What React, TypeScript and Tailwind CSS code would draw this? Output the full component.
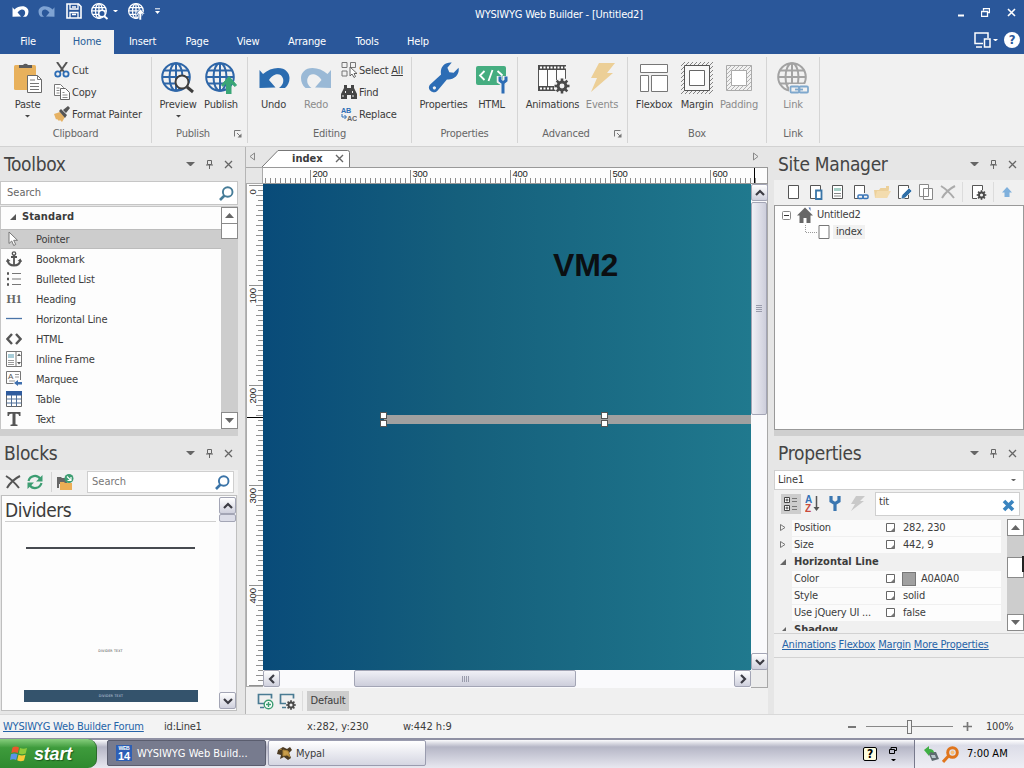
import React from 'react';

type SvgProps = { w?: number; h?: number; box?: string; className?: string; children: React.ReactNode };

const Svg: React.FC<SvgProps> = ({ w = 16, h = 16, box, className = '', children }) => (
  <svg width={w} height={h} viewBox={box || `0 0 ${w} ${h}`} fill="none" className={`shrink-0 ${className}`}>
    {children}
  </svg>
);

const Caret: React.FC<{ color?: string; size?: number }> = ({ color = '#444', size = 6 }) => (
  <Svg w={size} h={size / 2} box="0 0 6 3">
    <path d="M0 0h6L3 3z" fill={color} />
  </Svg>
);

const Globe: React.FC<{ color: string; w?: number; sw?: number }> = ({ color, w = 32, sw = 2 }) => (
  <g stroke={color} strokeWidth={sw} transform={`scale(${w / 32})`}>
    <circle cx="15" cy="15" r="13.8" />
    <ellipse cx="15" cy="15" rx="6.5" ry="13.8" />
    <path d="M15 1v28M1 15h28M3 8.5h24M3 21.5h24" />
  </g>
);

const UndoShape: React.FC<{ color: string }> = ({ color }) => (
  <path d="M1 4L4.500 8C9 4 14 2 19.500 2C27 2 31 7 31 12C31 16 29.500 19.500 26.500 22H20.500C24 19.500 25.500 16 24.500 12.500C23.500 9 20.500 7.500 17 8.500C14 9.500 12 11.500 10.500 14L17 21.500L1 22Z" fill={color} />
);

const Gear: React.FC<{ cx: number; cy: number; r: number; color?: string; bg?: string }> = ({ cx, cy, r, color = '#4a4a4a', bg = '#f1f1f1' }) => (
  <g>
    <circle cx={cx} cy={cy} r={r * 0.72} fill={color} />
    {[0, 45, 90, 135].map(a => (
      <rect key={a} x={cx - r * 0.17} y={cy - r} width={r * 0.34} height={r * 2} fill={color} transform={`rotate(${a} ${cx} ${cy})`} />
    ))}
    <circle cx={cx} cy={cy} r={r * 0.33} fill={bg} />
  </g>
);

const WrenchShape: React.FC<{ color: string }> = ({ color }) => (
  <path d="M2 23L13 13C11.500 6 16 0 24 0.500L19.500 6L21.500 10.500L26 11L31 6C32.500 13 26 19 19 18L9 30C5 34 -3 28 2 23ZM5 25.500a1.600 1.600 0 1 0 2.200 0a1.600 1.600 0 0 0-2.200 0Z" fill={color} fillRule="evenodd" />
);

const icons: Record<string, React.ReactNode> = {
  paste: (
    <Svg w={32} h={32}>
      <rect x="2" y="3" width="22" height="25" rx="1.500" fill="#e8b15c" />
      <path d="M7 6V3h4a3 3 0 0 1 5 0h4v3z" fill="#5b5b5b" />
      <path d="M15.500 13.500h10l4 4v13h-14z" fill="#fff" stroke="#6a6a6a" />
      <path d="M25.500 13.500v4h4M18 18h5M18 21.500h9M18 24.500h9M18 27.500h9" stroke="#777" />
    </Svg>
  ),
  preview: (
    <Svg w={34} h={32}>
      <Globe color="#2e66a8" sw={2} />
      <circle cx="21" cy="20" r="6.500" fill="#f1f1f1" stroke="#3e3e3e" strokeWidth="2" />
      <path d="M26 25l6 5" stroke="#3e3e3e" strokeWidth="3" />
    </Svg>
  ),
  publish: (
    <Svg w={32} h={32}>
      <Globe color="#2e66a8" sw={2} />
      <path d="M24 14.500l7.500 8.500-1.500 1.500-4-3.500V32h-4.500V21l-3.500 3.500-1.500-1.500z" fill="#3aa676" stroke="#3aa676" strokeWidth="1" />
    </Svg>
  ),
  undo: <Svg w={32} h={32} box="-.5 -4 32 32"><UndoShape color="#2b6cb0" /></Svg>,
  redo: <Svg w={32} h={32} box="0 -4 32 32"><g transform="translate(32 0) scale(-1 1)"><UndoShape color="#9ab9d6" /></g></Svg>,
  properties: <Svg w={34} h={32} box="-1 0 34 33"><WrenchShape color="#2d6db5" /></Svg>,
  html: (
    <Svg w={34} h={32}>
      <rect x="1" y="4" width="30" height="19" rx="2" fill="#45ad80" />
      <path d="M9.500 9L5 13.500 9.500 18M22.500 9l5 4.500M17.500 8l-4 11" stroke="#fff" strokeWidth="1.800" />
      <path d="M24.500 14v5l3 2 3-2v-5M28 20v12" stroke="#f1f1f1" strokeWidth="5.500" />
      <path d="M25 14.500v4l3 2.500 3-2.500v-4M28 20v11.500" stroke="#2d6db5" strokeWidth="3" />
    </Svg>
  ),
  animations: (
    <Svg w={34} h={32}>
      <path d="M2.500 3.500h27v25h-27z" fill="#fdfdfd" stroke="#555" />
      <path d="M2 5.500h28M2 26.500h28" stroke="#4c4c4c" strokeWidth="5" />
      <path d="M4 5.500h26M4 26.500h26" stroke="#fff" strokeWidth="2" strokeDasharray="2 1.500" />
      <path d="M11.500 8v16M20.500 8v16" stroke="#555" />
      <circle cx="26" cy="24" r="8" fill="#f1f1f1" />
      <Gear cx={26} cy={24} r={7.5} />
    </Svg>
  ),
  events: (
    <Svg w={32} h={32}>
      <path d="M13 1h16l-8 10h6L5 30l6-14H5z" fill="#eccf97" />
    </Svg>
  ),
  flexbox: (
    <Svg w={32} h={32}>
      <g fill="#fff" stroke="#777">
        <path d="M2.500 2.500h27v8h-27zM2.500 13.500h8v16h-8zM13.500 13.500h16v16h-16z" />
      </g>
    </Svg>
  ),
  margin: (
    <Svg w={32} h={32}>
      <defs>
        <pattern id="hatch" width="4" height="4" patternUnits="userSpaceOnUse">
          <path d="M-1 1l2-2M0 4l4-4M3 5l2-2" stroke="#777" strokeWidth=".9" />
        </pattern>
      </defs>
      <rect width="32" height="32" fill="url(#hatch)" />
      <path d="M3.500 3.500h25v25h-25z" fill="#f8f8f8" stroke="#555" />
      <path d="M8.500 8.500h15v15h-15z" fill="#fff" stroke="#666" />
    </Svg>
  ),
  padding: (
    <Svg w={32} h={32}>
      <defs>
        <pattern id="hatchLight" width="4" height="4" patternUnits="userSpaceOnUse">
          <path d="M-1 1l2-2M0 4l4-4M3 5l2-2" stroke="#aaa" strokeWidth=".9" />
        </pattern>
      </defs>
      <path d="M3.500 3.500h25v25h-25z" fill="url(#hatchLight)" stroke="#aaa" />
      <path d="M8.500 8.500h15v15h-15z" fill="#fff" stroke="#aaa" />
    </Svg>
  ),
  link: (
    <Svg w={32} h={32}>
      <Globe color="#a3a3a3" />
      <rect x="12" y="22" width="20" height="10" fill="#f1f1f1" />
      <g stroke="#7fa8cd" strokeWidth="1.800">
        <rect x="13.500" y="24.500" width="8.500" height="6" rx="1" />
        <rect x="22.500" y="24.500" width="8.500" height="6" rx="1" />
        <path d="M18 27.500h8" />
      </g>
    </Svg>
  ),
  cut: (
    <Svg>
      <path d="M3 0l7 10M13 0L6 10" stroke="#555" strokeWidth="2" />
      <circle cx="3.800" cy="12" r="2.600" stroke="#2d6db5" strokeWidth="1.800" />
      <circle cx="12" cy="12" r="2.600" stroke="#2d6db5" strokeWidth="1.800" />
    </Svg>
  ),
  copy: (
    <Svg>
      <path d="M.5.500h6l3 3v8h-9z" fill="#fff" stroke="#777" />
      <path d="M6.500 4.500h5l4 4v7h-9z" fill="#fff" stroke="#666" />
      <path d="M2.500 4h3M2.500 6.500h3M2.500 9h3M8.500 8.500h2M8.500 11h5M8.500 13.500h5" stroke="#888" />
    </Svg>
  ),
  painter: (
    <Svg>
      <path d="M0 8l6-2 5 5-3 5-2-2-1 1-2-2-1 .5z" fill="#e6b264" />
      <path d="M5 5l2-2 6 6-2 3zM9 4l5-4 2 2-4 5z" fill="#555" />
    </Svg>
  ),
  selectAll: (
    <Svg>
      <path d="M1 .5h5v5H1zM9.500.500h5v5h-5zM1 9h5v5H1z" stroke="#777" />
      <path d="M9 5v9l2-2 2 3.500 1.500-1L13 11.500h3z" fill="#fff" stroke="#555" strokeWidth=".9" />
    </Svg>
  ),
  find: (
    <Svg>
      <path d="M3 1h3v3h4V1h3v3l3 6v5h-6v-4H6v4H0v-5l3-6z" fill="#454545" />
      <path d="M2 13v-2M4.500 7v2M11.500 7v2M12 13v-2" stroke="#f1f1f1" />
    </Svg>
  ),
  replace: (
    <Svg>
      <text x="0" y="7" fontSize="8" textLength="10" lengthAdjust="spacingAndGlyphs" fill="#2d6db5" fontFamily="Liberation Sans" fontWeight="bold">AB</text>
      <text x="6" y="15" fontSize="8" textLength="10" lengthAdjust="spacingAndGlyphs" fill="#666" fontFamily="Liberation Sans" fontWeight="bold">AC</text>
      <path d="M1 8v3h4M3.500 9l2 2-2 2" stroke="#2d6db5" />
    </Svg>
  ),
};

// ---------- Window chrome ----------

const menuTabs = [
  { name: 'File', width: 'w-[60px] pr-1' },
  { name: 'Home', width: 'w-[54px]' },
  { name: 'Insert', width: 'w-[57px]' },
  { name: 'Page', width: 'w-[52px]' },
  { name: 'View', width: 'w-[50px]' },
  { name: 'Arrange', width: 'w-[68px]' },
  { name: 'Tools', width: 'w-[52px]' },
  { name: 'Help', width: 'w-[50px]' },
];

const TitleBar: React.FC = () => (
  <header className="h-[54px] shrink-0 bg-[#2a579a] text-white">
    <div className="flex h-[30px] items-center pl-3 pr-2">
      <div className="flex w-[300px] items-center pb-2">
        <Svg w={17} h={13} box="0 0 32 24"><UndoShape color="#fff" /></Svg>
        <Svg w={17} h={13} box="0 0 32 24" className="ml-[9px]"><g transform="translate(32 0) scale(-1 1)"><UndoShape color="#7fa3d3" /></g></Svg>
        <Svg w={16} h={16} className="ml-[11px]">
          <path d="M1 1h11.500L15 3.500V15H1z" stroke="#fff" strokeWidth="1.600" />
          <path d="M4 1v5h8V1M4 15V9.500h8V15M6 11.500h4M6 4h4" stroke="#fff" strokeWidth="1.300" />
        </Svg>
        <Svg w={18} h={17} className="ml-[9px]">
          <Globe color="#fff" w={17} sw={2.400} />
          <circle cx="11" cy="10.500" r="3.200" fill="#2a579a" stroke="#fff" strokeWidth="1.400" />
          <path d="M13 13l3.500 3" stroke="#fff" strokeWidth="2" />
        </Svg>
        <span className="ml-1"><Caret color="#fff" size={5} /></span>
        <Svg w={17} h={17} className="ml-[10px]">
          <Globe color="#fff" w={17} sw={2.400} />
          <path d="M12.500 6l4.500 5h-3.500v6h-2.500v-6H8z" fill="#fff" stroke="#2a579a" strokeWidth=".6" />
        </Svg>
        <Svg w={5} h={7} className="ml-[10px]"><path d="M0 .8h5" stroke="#fff" /><path d="M0 3h5L2.500 6z" fill="#fff" /></Svg>
      </div>
      <div className="w-[494px] pb-px text-center">WYSIWYG Web Builder - [Untitled2]</div>
      <div className="flex flex-1 items-center justify-end gap-[17px] pb-[5px]">
        <Svg w={7} h={9}><path d="M1 7.500h6" stroke="#fff" strokeWidth="2" /></Svg>
        <Svg w={9} h={9}><path d="M2.500 2.500v-2h6v4h-2M.5 3.500h6v5h-6z" stroke="#fff" strokeWidth="1.300" /></Svg>
        <Svg w={9} h={9}><path d="M1 1l7 7M8 1L1 8" stroke="#fff" strokeWidth="1.600" /></Svg>
      </div>
    </div>
    <div className="flex h-6 items-stretch">
      {menuTabs.map(tab => (
        <button
          key={tab.name}
          className={`${tab.width} text-center ${tab.name === 'Home' ? 'bg-[#f1f1f1] text-[#2a6099]' : ''}`}
        >
          {tab.name}
        </button>
      ))}
      <div className="flex flex-1 items-center justify-end pb-1 pr-1">
        <Svg w={17} h={16}>
          <path d="M9 11.500H1V1h13v5" stroke="#fff" strokeWidth="1.500" />
          <path d="M2 15h6M10.500 7h5.500v8h-5.500z" stroke="#fff" strokeWidth="1.500" />
        </Svg>
        <span className="ml-[2px] mr-[6px]"><Caret color="#fff" size={5} /></span>
        <span className="flex size-4 items-center justify-center rounded-full bg-white text-[13px] font-bold text-[#2a579a]">?</span>
      </div>
    </div>
  </header>
);

// ---------- Ribbon ----------

type BigButtonProps = { icon: string; label: string; width: string; dim?: boolean; menu?: boolean };

const BigButton: React.FC<BigButtonProps> = ({ icon, label, width, dim, menu }) => (
  <button className={`flex flex-col items-center ${width} ${dim ? 'text-[#8b8b8b]' : 'text-[#3c3c3c]'}`}>
    {icons[icon]}
    <span className="mt-1 whitespace-nowrap leading-[14px]">{label}</span>
    {menu && <span className="mt-[3px]"><Caret size={5} /></span>}
  </button>
);

const SmallButton: React.FC<{ icon: string; children: React.ReactNode }> = ({ icon, children }) => (
  <button className="flex h-[22px] items-center gap-[2px] whitespace-nowrap">
    {icons[icon]}
    <span className="pt-[2px]">{children}</span>
  </button>
);

type RibbonGroupProps = { title: string; width: string; pad?: string; launcher?: boolean; children: React.ReactNode };

const RibbonGroup: React.FC<RibbonGroupProps> = ({ title, width, pad = '', launcher, children }) => (
  <section className={`flex flex-col border-r border-[#d5d5d5] ${width}`}>
    <div className={`flex h-[70px] pt-[5px] ${pad}`}>{children}</div>
    <div className="flex h-[18px] items-center text-[#666]">
      <span className="flex-1 text-center">{title}</span>
      {launcher && (
        <Svg w={8} h={8} className="mr-[5px]">
          <path d="M.5 6.500v-6h6M3 3l3 3" stroke="#777" /><path d="M7.500 3.500v4h-4z" fill="#777" />
        </Svg>
      )}
    </div>
  </section>
);

const Ribbon: React.FC = () => (
  <div className="flex h-[93px] shrink-0 border-b border-[#d2d2d2] bg-[#f1f1f1] pb-[3px] pt-[3px]">
    <RibbonGroup title="Clipboard" width="w-[152px]">
      <BigButton icon="paste" label="Paste" width="w-[55px]" menu />
      <div className="-ml-px -mt-[3px]">
        <SmallButton icon="cut">Cut</SmallButton>
        <SmallButton icon="copy">Copy</SmallButton>
        <SmallButton icon="painter">Format Painter</SmallButton>
      </div>
    </RibbonGroup>
    <RibbonGroup title="Publish" width="w-[96px]" pad="pl-1" launcher>
      <BigButton icon="preview" label="Preview" width="w-[44px]" menu />
      <BigButton icon="publish" label="Publish" width="w-[42px]" />
    </RibbonGroup>
    <RibbonGroup title="Editing" width="w-[164px]" pad="pl-1">
      <BigButton icon="undo" label="Undo" width="w-[43px]" />
      <BigButton icon="redo" label="Redo" width="w-[42px]" dim />
      <div className="-mt-[3px] ml-1">
        <SmallButton icon="selectAll">Select <u>All</u></SmallButton>
        <SmallButton icon="find">Find</SmallButton>
        <SmallButton icon="replace">Replace</SmallButton>
      </div>
    </RibbonGroup>
    <RibbonGroup title="Properties" width="w-[106px]">
      <BigButton icon="properties" label="Properties" width="w-[63px]" />
      <BigButton icon="html" label="HTML" width="w-[33px]" />
    </RibbonGroup>
    <RibbonGroup title="Advanced" width="w-[110px]" pad="pl-px" launcher>
      <BigButton icon="animations" label="Animations" width="w-[67px]" />
      <BigButton icon="events" label="Events" width="w-[32px]" dim />
    </RibbonGroup>
    <RibbonGroup title="Box" width="w-[139px]" pad="pl-1">
      <BigButton icon="flexbox" label="Flexbox" width="w-[44px]" />
      <BigButton icon="margin" label="Margin" width="w-[42px]" />
      <BigButton icon="padding" label="Padding" width="w-[42px]" dim />
    </RibbonGroup>
    <RibbonGroup title="Link" width="w-[53px]">
      <BigButton icon="link" label="Link" width="w-[53px]" dim />
    </RibbonGroup>
  </div>
);

// ---------- Shared panel pieces ----------

const PanelHeader: React.FC<{ title: string; edge?: string }> = ({ title, edge = 'pr-[5px]' }) => (
  <div className={`flex h-[34px] shrink-0 items-center bg-[#e6e6e6] pl-1 text-[#444] ${edge}`}>
    <h2 className="flex-1 text-[19px] leading-none tracking-[-0.3px]">{title}</h2>
    <div className="flex items-center gap-[11px]">
      <Caret color="#666" size={9} />
      <Svg w={7} h={9}><path d="M1.500.500h4v4h-4zM0 5h7M3.500 5v4" stroke="#666" /></Svg>
      <Svg w={9} h={9}><path d="M1 1l7 7M8 1L1 8" stroke="#666" strokeWidth="1.300" /></Svg>
    </div>
  </div>
);

const SearchIcon: React.FC<{ color?: string }> = ({ color = '#3b74a8' }) => (
  <Svg w={15} h={15}>
    <circle cx="8.700" cy="6" r="4.800" stroke={color} strokeWidth="1.900" />
    <path d="M5.500 9.500L1 14" stroke={color} strokeWidth="2.600" />
  </Svg>
);

const FlatArrow: React.FC<{ up?: boolean }> = ({ up }) => (
  <div className="flex h-[17px] w-[17px] shrink-0 items-center justify-center border border-[#8a8a8a] bg-white">
    <Svg w={9} h={5}>{up ? <path d="M0 5h9L4.500 0z" fill="#666" /> : <path d="M0 0h9L4.500 5z" fill="#666" />}</Svg>
  </div>
);

const chevrons = {
  up: 'M1 7l4-4 4 4',
  down: 'M1 3l4 4 4-4',
  left: 'M7 1L3 5l4 4',
  right: 'M3 1l4 4-4 4',
};

const XpArrow: React.FC<{ dir: keyof typeof chevrons }> = ({ dir }) => (
  <div className="flex size-[17px] shrink-0 items-center justify-center rounded-[2px] border border-[#a3a5b5] bg-linear-to-b from-white to-[#cfd0dd]">
    <Svg w={10} h={10}><path d={chevrons[dir]} stroke="#3c3c44" strokeWidth="2.200" /></Svg>
  </div>
);

// ---------- Left column ----------

const toolboxItems: { name: string; icon: React.ReactNode }[] = [
  { name: 'Pointer', icon: <path d="M3 1v11.500l2.700-2.500 2 4.500 2-1-2-4.200h3.800z" fill="#fff" stroke="#777" /> },
  { name: 'Bookmark', icon: <><circle cx="8" cy="2.500" r="1.700" stroke="#555" strokeWidth="1.300" /><path d="M8 4v10.500M5 6h6" stroke="#555" strokeWidth="1.800" /><path d="M1.500 9c.5 3.500 3 5.500 6.500 5.500s6-2 6.500-5.500" stroke="#555" strokeWidth="2" /><path d="M0 11l1.500-3.500L4.500 10zM16 11l-1.500-3.500L11.500 10z" fill="#555" /></> },
  { name: 'Bulleted List', icon: <><path d="M1 2.500h2M1 8h2M1 13.500h2" stroke="#555" strokeWidth="2.400" /><path d="M6 2.500h9M6 8h9M6 13.500h9" stroke="#777" strokeWidth="1.200" /></> },
  { name: 'Heading', icon: <text x="8" y="12" textAnchor="middle" fontSize="12" fontWeight="bold" fontFamily="Liberation Serif" fill="#666">H1</text> },
  { name: 'Horizontal Line', icon: <path d="M0 7.500h16" stroke="#4a74a8" strokeWidth="1.300" /> },
  { name: 'HTML', icon: <path d="M6 3L1.500 8 6 13M10 3l4.500 5-4.500 5" stroke="#555" strokeWidth="2.400" /> },
  { name: 'Inline Frame', icon: <><path d="M.5.500h15v15H.5zM10 .5v15" fill="#fff" stroke="#777" /><path d="M2 3h6v4H2z" fill="#a8cdd8" /><path d="M2 9.500h6M2 11.500h6M2 13.500h6" stroke="#999" /><path d="M11 5h4l-2-2.500zM11 11h4l-2 2.500z" fill="#555" /></> },
  { name: 'Marquee', icon: <><path d="M14.500 9V.5H.5v12h7" stroke="#777" /><text x="2" y="8" fontSize="8" fontFamily="Liberation Sans" fill="#555">A</text><path d="M9 3.500h4M9 6h4M3 10h6" stroke="#999" /><path d="M8 12l4-3v2h4v2.500h-4V15z" fill="#3f6fae" /></> },
  { name: 'Table', icon: <><path d="M.5.500h15v15H.5z" fill="#fff" stroke="#666" /><path d="M0 0h16v4.500H0z" fill="#2f5c9e" /><path d="M.5 8h15M.5 12h15M5.500 4v11.500M10.500 4v11.500" stroke="#4f6f98" /></> },
  { name: 'Text', icon: <path d="M1.500 1h13v4h-1.500c0-1.500-.8-2.200-2-2.200H9.500v10.400l2 .5V15h-7v-1.300l2-.5V2.800H5c-1.200 0-2 .7-2 2.200H1.500z" fill="#555" /> },
];

const Toolbox: React.FC = () => (
  <>
    <PanelHeader title="Toolbox" />
    <div className="flex h-6 items-center justify-between border border-[#c6c6c6] bg-white pl-[6px] pr-[3px] text-[#666]">
      <span className="tracking-[0px]">Search</span>
      <SearchIcon color="#467c98" />
    </div>
    <div className="mt-px flex h-[223px] border-l border-t border-[#c6c6c6] bg-[#fdfdfd]">
      <div className="flex-1 overflow-hidden">
        <div className="flex h-[22px] items-center gap-[6px] pb-[3px] pl-[9px] font-bold">
          <Svg w={6} h={6}><path d="M6 0v6H0z" fill="#555" /></Svg>
          <span className="tracking-[0.1px]">Standard</span>
        </div>
        {toolboxItems.map((item, i) => (
          <div
            key={item.name}
            className={`flex h-5 items-center gap-[14px] pl-[5px] ${i === 0 ? 'border-y border-[#bcbcbc] bg-[#cdcdcd]' : ''}`}
          >
            <Svg>{item.icon}</Svg>
            <span className="pt-px">{item.name}</span>
          </div>
        ))}
      </div>
      <div className="flex w-[17px] flex-col bg-[#cdcdcd]">
        <FlatArrow up />
        <div className="h-[15px] border border-t-0 border-[#8a8a8a] bg-white" />
        <div className="flex-1" />
        <FlatArrow />
      </div>
    </div>
    <div className="h-[7px] bg-[#cfcfcf]" />
  </>
);

const Blocks: React.FC = () => (
  <>
    <PanelHeader title="Blocks" />
    <div className="flex h-[25px] items-center bg-[#f0f0f0] pb-px pl-[5px] pr-1">
      <Svg w={16} h={14}><path d="M1 1c5 3 9 7 13 12M15 1C9 4 5 8 2 13" stroke="#555" strokeWidth="2" /></Svg>
      <Svg w={16} h={16} className="ml-[6px]">
        <path d="M1.500 7C3 1.500 10 0 13.500 5M14.500 9C13 14.500 6 16 2.500 11" stroke="#3d9d72" strokeWidth="2.200" />
        <path d="M15.500 1v6.500H9zM.5 15V8.500H7z" fill="#3d9d72" />
      </Svg>
      <div className="ml-2 h-5 w-px bg-[#d4d4d4]" />
      <Svg w={17} h={17} className="ml-[5px]">
        <path d="M0 3h4l1 1h5v6H0z" fill="#666" />
        <path d="M3 8h4l1 1h7v7H3z" fill="#ecae55" />
        <path d="M0 3h2v11H0z" fill="#666" />
        <circle cx="12" cy="4.500" r="4.500" fill="#3d9d72" />
        <path d="M10 2.500l4 4M14 3v3.500h-3.500" stroke="#fff" strokeWidth="1.200" />
      </Svg>
      <div className="ml-[13px] flex h-[22px] flex-1 items-center justify-between border border-[#cfcfcf] bg-white pl-1 pr-[3px] text-[#777]">
        <span className="tracking-[0px]">Search</span>
        <SearchIcon />
      </div>
    </div>
    <div className="mx-px flex h-[216px] border border-[#bfbfbf] bg-[#fdfdfd] py-px">
      <div className="flex flex-1 flex-col px-[3px]">
        <div className="h-[25px] border-b border-[#cfcfcf] pt-1 text-[19px] leading-none tracking-[-0.5px]">Dividers</div>
        <div className="mx-[21px] mt-[25px] h-[2px] bg-[#474a50]" />
        <div className="mt-[99px] text-center text-[3.500px] leading-[6px] tracking-[0.2px]">DIVIDER TEXT</div>
        <div className="ml-[19px] mr-[18px] mt-[36px] flex h-3 items-center justify-center bg-[#34536c] text-[3.500px] tracking-[0.2px] text-[#c9d6e0]">DIVIDER TEXT</div>
      </div>
      <div className="flex w-[17px] flex-col bg-[#f5f5f8]">
        <XpArrow dir="up" />
        <div className="h-2 rounded-[2px] border border-[#a3a5b5] bg-[#dcdde8]" />
        <div className="flex-1" />
        <XpArrow dir="down" />
      </div>
    </div>
  </>
);

// ---------- Document area ----------

const HorizontalRuler: React.FC = () => {
  const ticks = Array.from({ length: 99 }, (_, i) => 155 + i * 5).filter(v => v < 655);
  return (
    <Svg w={505} h={17}>
      <rect width="505" height="17" fill="#fdfdfd" />
      {ticks.map(v => {
        const x = v - 152.5;
        const major = v % 100 === 0;
        return (
          <g key={v}>
            <path d={`M${x} ${major ? 3 : 11}V16`} stroke="#8c8c8c" />
            {major && <text x={x + 2} y="10" fontSize="9.500" fill="#222" textLength="15" fontFamily="Liberation Sans">{v}</text>}
          </g>
        );
      })}
      <path d="M491.500 0v17" stroke="#000" />
      <path d="M0 .5h505M0 16.500h505M504.500 0v17" stroke="#999" />
    </Svg>
  );
};

const VerticalRuler: React.FC = () => (
  <Svg w={17} h={503}>
    <rect width="17" height="503" fill="#fdfdfd" />
    {Array.from({ length: 101 }, (_, i) => i * 5).map(v => {
      const y = v + 1.5;
      const major = v % 100 === 0;
      return (
        <g key={v}>
          <path d={`M${major ? 3 : v % 10 === 0 ? 10 : 12} ${y}H17`} stroke="#909090" />
          {major && v < 500 && (
            <text transform={`translate(9.500 ${y + (v === 0 ? 9 : 18)}) rotate(-90)`} fontSize="9.500" fill="#222" fontFamily="Liberation Sans">{v}</text>
          )}
        </g>
      );
    })}
    <path d="M0 233.500h17" stroke="#000" />
    <path d="M.5 0v503M0 502.500h17" stroke="#aaa" />
  </Svg>
);

const Handles: React.FC<{ className: string }> = ({ className }) => (
  <div className={`absolute top-[228px] flex flex-col gap-[1px] ${className}`}>
    <div className="size-[7px] border border-[#555] bg-white" />
    <div className="size-[7px] border border-[#555] bg-white" />
  </div>
);

const DocumentArea: React.FC = () => (
  <main className="ml-[5px] flex w-[523px] shrink-0 flex-col border-l border-[#b5b5b5] bg-[#f0f0f0]">
    <div className="flex h-5 items-end bg-[#e6e6e6] pl-[2px]">
      <Svg w={8} h={9} className="mb-[6px]"><path d="M6.500 1v7L2 4.500z" stroke="#888" /></Svg>
      <div className="flex items-end">
        <Svg w={90} h={18} className="-mr-[82px] ml-[5px]">
          <path d="M1 18L17 1.500H86.500a2 2 0 0 1 2 2V18" fill="#fff" stroke="#777" />
        </Svg>
        <div className="z-10 flex h-[18px] w-[82px] items-center pl-[23px] pt-px">
          <span className="w-[43px] font-bold tracking-[0px]">index</span>
          <Svg w={9} h={9}><path d="M1 1l7 7M8 1L1 8" stroke="#666" strokeWidth="1.400" /></Svg>
        </div>
      </div>
      <div className="flex-1" />
      <Svg w={8} h={9} className="mb-[6px] mr-[8px]"><path d="M1.500 1v7L6 4.500z" stroke="#888" /></Svg>
    </div>
    <div className="flex h-[17px]">
      <div className="w-[17px] border-b border-r border-t border-[#aaa] bg-[#e6e6e6]" />
      <HorizontalRuler />
    </div>
    <div className="flex h-[504px]">
      <VerticalRuler />
      <div className="flex w-[488px] flex-col">
        <div className="relative h-[486px] overflow-hidden bg-linear-to-r from-[#094b79] via-[#155f7c] via-40% to-[#20798e]">
          <div className="absolute left-[290px] top-[61px] font-[Liberation_Sans] text-[32px] font-bold leading-10 text-[#0b0f12]">VM2</div>
          <div className="absolute left-[121px] right-0 top-[231px] h-[9px] bg-[#a0a0a0]" />
          <Handles className="left-[117px]" />
          <Handles className="left-[338px]" />
        </div>
        <div className="flex h-[18px] bg-[#fafafc]">
          <XpArrow dir="left" />
          <div className="w-[74px]" />
          <div className="flex h-[17px] w-[222px] items-center justify-center gap-px rounded-[2px] border border-[#a3a5b5] bg-linear-to-b from-[#f0f0f6] to-[#cdcedb]">
            {[0, 1, 2, 3].map(i => <div key={i} className="h-[6px] w-px bg-[#9a9cac]" />)}
          </div>
          <div className="flex-1" />
          <XpArrow dir="right" />
        </div>
      </div>
      <div className="flex w-[17px] flex-col border-r border-[#a8a8a8] bg-[#fafafc]">
        <XpArrow dir="up" />
        <div className="mt-px flex h-[213px] w-4 flex-col items-center justify-center gap-px rounded-[2px] border border-[#a3a5b5] bg-linear-to-r from-[#f0f0f6] to-[#cdcedb]">
          {[0, 1, 2, 3].map(i => <div key={i} className="h-px w-[6px] bg-[#9a9cac]" />)}
        </div>
        <div className="flex-1" />
        <XpArrow dir="down" />
        <div className="h-[18px] border-b border-[#a8a8a8] bg-[#ececec]" />
      </div>
    </div>
    <div className="flex flex-1 items-center pl-[11px]">
      <Svg w={17} h={17}>
        <path d="M7 10.500H1.500V1.500h13v4M3 14.500h4" stroke="#4a7b93" strokeWidth="1.700" />
        <circle cx="11.500" cy="11.500" r="4.300" fill="#fff" stroke="#3d9d72" strokeWidth="1.400" /><path d="M11.500 9v5M9 11.500h5" stroke="#3d9d72" strokeWidth="1.400" />
      </Svg>
      <Svg w={17} h={17} className="ml-[5px]">
        <path d="M7 10.500H1.500V1.500h13v4M3 14.500h4" stroke="#4a7b93" strokeWidth="1.700" />
        <Gear cx={12} cy={12} r={4.800} />
      </Svg>
      <div className="ml-[6px] h-5 w-px bg-[#dcdcdc]" />
      <div className="ml-1 flex h-5 w-[42px] items-center justify-center bg-[#cdcdcd]">Default</div>
    </div>
  </main>
);

// ---------- Right column ----------

const sheet = 'M1.500 1.500h10v13h-10z';

const SiteManager: React.FC = () => (
  <>
    <PanelHeader title="Site Manager" edge="pr-[7px]" />
    <div className="-mt-px flex h-[25px] items-center bg-[#f0f0f0] pb-[2px] pl-[13px]">
      <Svg className="mr-[6px]"><path d={sheet} fill="#fff" stroke="#555" /></Svg>
      <Svg className="mr-[6px]"><path d={sheet} fill="#fff" stroke="#555" /><path d="M7 6.500h5.500v8.500H7z" fill="#fff" stroke="#3a76a8" strokeWidth="1.800" /></Svg>
      <Svg className="mr-[6px]"><path d={sheet} fill="#fff" stroke="#555" /><path d="M3 4h7v3H3z" fill="#a5d0c6" /><path d="M3 9.500h7M3 12h7" stroke="#888" /></Svg>
      <Svg className="mr-[5px]"><path d="M5 14.500H1.500v-13h10V9" fill="#fff" stroke="#555" /><rect x="5" y="11" width="5" height="3.500" rx="1" stroke="#3a76b8" strokeWidth="1.500" /><rect x="10" y="11" width="5" height="3.500" rx="1" stroke="#3a76b8" strokeWidth="1.500" /></Svg>
      <Svg w={17} className="mr-[6px]"><path d="M0 6h5l1.500-2H12V2h3v3l-2 9H1z" fill="#ecd09a" /><path d="M3 7h14l-4 7H1z" fill="#f3dcae" /></Svg>
      <Svg className="mr-[5px]"><path d={sheet} fill="#fff" stroke="#555" /><path d="M4 15l1-4 7-7 3 3-7 7z" fill="#2f6fa8" stroke="#fff" strokeWidth=".6" /></Svg>
      <Svg className="mr-[6px]"><path d="M1.500.500h9v12h-9zM5.500 4.500h9v11h-9z" fill="#fff" stroke="#888" /></Svg>
      <Svg><path d="M1 2c5 3 9 7 13 12M15 2C9 5 5 9 2 14" stroke="#ababab" strokeWidth="2" /></Svg>
      <div className="ml-[6px] h-5 w-px bg-[#dcdcdc]" />
      <Svg className="ml-2"><path d="M6 14.500H1.500v-13h10V6" fill="#fff" stroke="#555" /><Gear cx={10.500} cy={11} r={4.800} /></Svg>
      <div className="ml-[6px] h-5 w-px bg-[#dcdcdc]" />
      <Svg w={10} h={12} className="ml-[8px]"><path d="M5 1l5 5.500H7.500V11h-5V6.500H0z" fill="#7fb0dc" /></Svg>
    </div>
    <div className="h-[225px] border border-[#999] bg-[#fdfdfd] pl-[7px]">
      <div className="flex h-[18px] items-center">
        <Svg w={9} h={9}><rect x=".5" y=".5" width="8" height="8" rx="1" fill="#fff" stroke="#888" /><path d="M2 4.500h5" stroke="#333" /></Svg>
        <Svg w={16} h={16} className="ml-[6px]"><path d="M8 .5l8 8h-2.500V16h-4v-5h-3v5h-4V8.500H0z" fill="#666" /><path d="M11.500.500h2V4z" fill="#4a6fb0" /></Svg>
        <span className="ml-[4px]">Untitled2</span>
      </div>
      <div className="flex h-4 items-center pl-[23px]">
        <Svg w={12} h={14}><path d="M.5 0v7.500H12" stroke="#999" strokeDasharray="1 1" /></Svg>
        <Svg w={12} h={14} className="ml-px"><path d="M1 .5h10v13H1z" fill="#fff" stroke="#777" /></Svg>
        <span className="ml-[3px] bg-[#f1f1f1] px-[3px]">index</span>
      </div>
    </div>
    <div className="h-[6px] bg-[#cfcfcf]" />
  </>
);

const propertyRows = [
  { name: 'Position', value: '282, 230', expandable: true },
  { name: 'Size', value: '442, 9', expandable: true },
  { name: 'Horizontal Line', group: true },
  { name: 'Color', value: 'A0A0A0', swatch: true },
  { name: 'Style', value: 'solid' },
  { name: 'Use jQuery UI ...', value: 'false' },
  { name: 'Shadow', group: true },
];

const Properties: React.FC = () => (
  <>
    <PanelHeader title="Properties" edge="pr-[7px]" />
    <div className="flex h-5 items-center justify-between border border-[#cfcfcf] bg-white pl-[3px] pr-[7px]">
      <span>Line1</span>
      <Caret color="#666" size={5} />
    </div>
    <div className="flex h-[27px] items-center bg-[#f0f0f0] pl-[7px] pr-1">
      <div className="flex size-5 items-center justify-center bg-[#cdcdcd]">
        <Svg><path d="M1.500 1.500h5v5h-5zM1.500 9.500h5v5h-5z" fill="#fff" stroke="#444" /><path d="M4 2.500v3M2.500 4h3M4 10.500v3M2.500 12h3" stroke="#444" /><path d="M9 2.500h5M9 5.500h5M9 10.500h5M9 13.500h5" stroke="#777" /></Svg>
      </div>
      <Svg w={16} h={18} className="ml-1">
        <text x="0" y="8" fontSize="10" fontWeight="bold" fontFamily="Liberation Sans" fill="#3473b8">A</text>
        <text x="0" y="17" fontSize="10" fontWeight="bold" fontFamily="Liberation Sans" fill="#c94a3c">Z</text>
        <path d="M11.500 1v13" stroke="#555" strokeWidth="1.500" /><path d="M8.500 12h6l-3 4z" fill="#555" />
      </Svg>
      <Svg w={12} h={17} className="ml-2">
        <path d="M2 1v5l4 2.500L10 6V1M6 8v8" stroke="#3a76b0" strokeWidth="3.200" />
      </Svg>
      <Svg w={15} h={17} className="ml-[9px]"><path d="M6 1h9l-5 5h4L1 16l4-7H1z" fill="#c9c9c9" /></Svg>
      <div className="ml-[10px] flex h-6 flex-1 justify-between border border-[#cfcfcf] bg-white pl-[3px] pr-1 pt-[2px]">
        <span>tit</span>
        <Svg w={13} h={13} className="mt-1"><path d="M2 2l9 9M11 2l-9 9" stroke="#3a84bf" strokeWidth="3.600" /></Svg>
      </div>
    </div>
    <div className="mt-[2px] flex h-[112px]">
      <div className="flex-1 overflow-hidden bg-[#f0f0f0]">
        {propertyRows.map(row =>
          row.group ? (
            <div key={row.name} className="flex h-[17px] items-center pl-[6px] font-bold">
              <Svg w={6} h={6}><path d="M6 0v6H0z" fill="#666" /></Svg>
              <span className="ml-2 tracking-[0px]">{row.name}</span>
            </div>
          ) : (
            <div key={row.name} className="flex h-[17px] items-center pl-[5px]">
              <span className="w-[13px]">
                {row.expandable && <Svg w={7} h={8}><path d="M1.500.500v6L6 3.500z" stroke="#777" /></Svg>}
              </span>
              <div className="flex h-4 w-[108px] items-center justify-between bg-[#fbfbfb] pl-[2px] pr-[5px]">
                <span className="whitespace-nowrap">{row.name}</span>
                <Svg w={9} h={9}><path d="M.5.500h8v8h-8z" fill="#fff" stroke="#666" /><path d="M8.500 4.500v4h-4z" fill="#777" /></Svg>
              </div>
              <div className="flex h-4 w-[101px] items-center bg-[#fdfdfd] pl-[3px]">
                {row.swatch && <span className="-ml-px mr-[5px] size-[14px] border border-[#777] bg-[#a0a0a0]" />}
                {row.value}
              </div>
            </div>
          ),
        )}
      </div>
      <div className="relative flex w-[17px] flex-col bg-[#cdcdcd]">
        <FlatArrow up />
        <div className="mt-[21px] h-[21px] border border-[#8a8a8a] bg-white" />
        <div className="flex-1" />
        <FlatArrow />
        <div className="absolute right-0 top-[37px] h-4 w-[2px] bg-[#222]" />
      </div>
    </div>
    <div className="mt-[2px] flex h-[25px] items-center gap-[3px] border-y border-[#d2d2d2] bg-[#f0f0f0] pb-px pl-[8px] text-[#2563a8] underline">
      <a>Animations</a>
      <a>Flexbox</a>
      <a>Margin</a>
      <a>More Properties</a>
    </div>
  </>
);

// ---------- Bottom bars ----------

const StatusBar: React.FC = () => (
  <footer className="flex h-[24px] shrink-0 items-center border-t border-[#d9d9d9] bg-[#f3f3f3] pl-[3px] pr-[9px]">
    <a className="w-[161px] text-[#2563a8] underline">WYSIWYG Web Builder Forum</a>
    <span className="w-[143px]">id:Line1</span>
    <span className="w-[96px] tracking-[0px]">x:282, y:230</span>
    <span className="flex-1 tracking-[0px]">w:442 h:9</span>
    <div className="flex items-center">
      <div className="h-[2px] w-2 bg-[#777]" />
      <div className="ml-[10px] flex items-center">
        <div className="h-px w-[41px] bg-[#888]" />
        <div className="h-[14px] w-[5px] border border-[#777] bg-[#f3f3f3]" />
        <div className="h-px w-[41px] bg-[#888]" />
      </div>
      <Svg w={9} h={9} className="ml-[10px]"><path d="M4.500 0v9M0 4.500h9" stroke="#777" strokeWidth="1.700" /></Svg>
      <span className="ml-[14px] w-[29px]">100%</span>
    </div>
  </footer>
);

const Taskbar: React.FC = () => (
  <div className="flex h-[30px] shrink-0 items-stretch border-t-2 border-[#8f90a3] bg-linear-to-b from-[#fbfbfd] via-[#b5b6c6] via-25% to-[#e8e8f0]">
    <button className="-mt-px flex w-[97px] items-center rounded-r-[9px] border-r border-[#2c6b2c] bg-linear-to-b from-[#86cf7d] via-[#3e9b3c] via-30% to-[#2f8a2f] pl-[10px]">
      <Svg w={19} h={18}>
        <path d="M2.500 2.500Q5.500.500 9 2.500L7.800 8Q4.500 6.500 1.300 8z" fill="#e8582c" />
        <path d="M10 3Q13.500 4.500 17 3l-1.300 5.500Q12 10 8.800 8.500z" fill="#8fcb3c" />
        <path d="M1 9.200Q4.500 7.600 7.500 9.200L6.200 15Q3 13.300 0 15z" fill="#5a93e8" />
        <path d="M8.500 9.700q3.300 1.500 7 0L14 15.500Q10.500 17 7.200 15.300z" fill="#f8ca38" />
      </Svg>
      <span className="ml-[5px] font-[Liberation_Sans] text-[18px] font-bold italic leading-none text-white [text-shadow:1px_1px_1px_#1c5a1c]">start</span>
    </button>
    <button className="mb-[2px] ml-[10px] flex w-[159px] items-center rounded-[2px] border border-[#5a5d6e] bg-[#777b8e] pl-2 text-white">
      <span className="flex size-4 flex-col items-center justify-end bg-[#2d5fb5] font-[Liberation_Sans] text-[11px] font-bold leading-[10px]">
        <span className="text-[5px] leading-[5px]">WEB</span>14
      </span>
      <span className="ml-[5px] whitespace-nowrap pt-px tracking-[0px]">WYSIWYG Web Build...</span>
    </button>
    <button className="mb-[2px] ml-[2px] flex w-[158px] items-center rounded-[2px] border border-[#9a9caf] bg-linear-to-b from-white to-[#d5d6e2] pl-2">
      <Svg>
        <path d="M1 5l5-3 4 2 3-2 2 3-3 3 2 5-3 2-4-3-4 2 1-4-4-1z" fill="#4b3a22" />
        <path d="M6 5l5 1 2 6-3-2-4 1zM2 5l3-1" fill="#c99d4a" stroke="#a98238" />
      </Svg>
      <span className="ml-[3px] pt-px">Mypal</span>
    </button>
    <div className="flex-1" />
    <div className="flex items-center pr-[17px]">
      <div className="flex size-[14px] items-center justify-center rounded-[2px] border border-black bg-[#ffffe1] text-[12px] font-bold text-black">?</div>
      <div className="ml-3 flex flex-col items-center gap-[5px]">
        <Svg w={8} h={7}><path d="M2 2V.5h5.500v3H6M.5 2.500h5v4h-5z" stroke="#000" /></Svg>
        <Caret color="#000" size={5} />
      </div>
    </div>
    <div className="flex w-[110px] items-center border-l border-[#77798c] bg-linear-to-b from-white via-[#dcdde8] via-20% to-[#eeeef4] pl-[9px]">
      <Svg>
        <path d="M4 6h8l3 7-7 2z" fill="#5e6a70" />
        <path d="M7 9h4l1 3H8z" fill="#b8c6cc" />
        <path d="M0 4l5-4v3c3 0 5 1 5 4L7 6 5 8v2z" fill="#3faf45" />
      </Svg>
      <Svg w={17} h={17} className="ml-[2px]">
        <circle cx="10.500" cy="6.500" r="4.800" stroke="#e0751c" strokeWidth="3" />
        <circle cx="10.500" cy="6.500" r="2" fill="#f6c07c" />
        <path d="M6.500 10L1 16" stroke="#e0751c" strokeWidth="3" />
      </Svg>
      <span className="ml-[8px] whitespace-nowrap tracking-[0px] text-black">7:00 AM</span>
    </div>
  </div>
);

const App: React.FC = () => {
  return (
    <div className="flex h-[768px] w-[1024px] flex-col overflow-hidden bg-[#f0f0f0] font-['DejaVu_Sans_Condensed','DejaVu_Sans',sans-serif] text-[11px] leading-[14px] tracking-[-0.2px] text-[#3c3c3c]">
      <TitleBar />
      <Ribbon />
      <div className="flex h-[567px] shrink-0 bg-[#e6e6e6]">
        <aside className="flex w-[240px] shrink-0 flex-col">
          <div className="flex w-[238px] flex-col">
            <Toolbox />
            <Blocks />
          </div>
        </aside>
        <DocumentArea />
        <aside className="flex flex-1 flex-col border-l-[6px] border-[#e6e6e6] bg-[#f0f0f0]">
          <SiteManager />
          <Properties />
        </aside>
      </div>
      <StatusBar />
      <Taskbar />
    </div>
  );
};

export default App;
